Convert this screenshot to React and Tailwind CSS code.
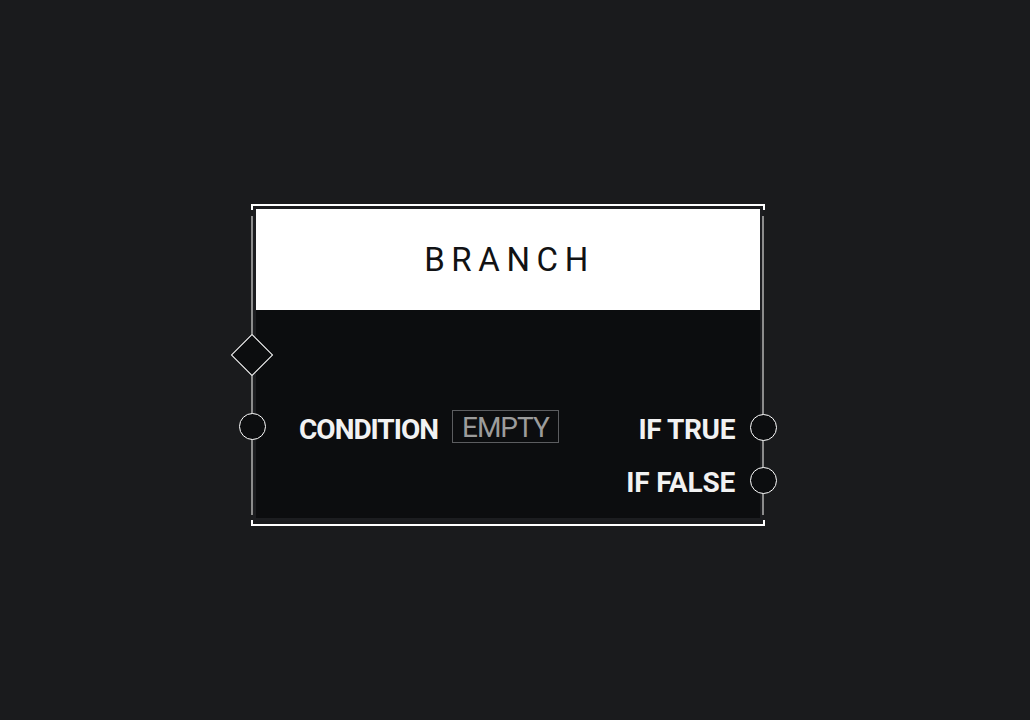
export default function App() {
  return (
    <div className="h-[720px] w-full bg-[#1a1b1d] pl-[251px] pt-[204px] font-[Roboto,sans-serif]">
      {/* node frame */}
      <div className="relative w-[514px] h-[322px] pl-[2px] pt-[3px]">
        {/* card */}
        <div className="w-[510px] h-[314px] flex flex-col bg-[#0c0d0f] border-x-[3px] border-t-2 border-b-[3px] border-[#1c1d20]">
          <div className="h-[101px] bg-white flex items-center justify-center pl-[3px]">
            <span className="text-[33px] leading-none tracking-[0.2em] text-[#111214]">BRANCH</span>
          </div>
          <div className="flex-1 flex justify-between items-start pl-[43px] pr-[25px] pt-[100px]">
            <div className="flex items-start gap-[14px]">
              <span className="mt-[6px] text-[28px] leading-[28px] font-bold tracking-[-1px] text-[#f2f2f2]">CONDITION</span>
              <span className="h-[33px] px-[9px] pt-[3px] flex items-center border border-[#5c5d60] text-[28px] leading-none tracking-[-1px] text-[#9c9c9c]">
                EMPTY
              </span>
            </div>
            <div className="flex flex-col items-end gap-[25px] pt-[6px]">
              <span className="text-[28px] leading-[28px] font-bold tracking-[-0.4px] text-[#f2f2f2]">IF TRUE</span>
              <span className="text-[28px] leading-[28px] font-bold tracking-[-0.2px] text-[#f2f2f2]">IF FALSE</span>
            </div>
          </div>
        </div>

        {/* frame lines */}
        <div className="absolute left-0 top-0 w-full h-[2px] bg-white" />
        <div className="absolute left-0 top-0 w-[2px] h-[6px] bg-white" />
        <div className="absolute right-0 top-0 w-[2px] h-[6px] bg-white" />
        <div className="absolute left-0 bottom-0 w-full h-[2px] bg-white" />
        <div className="absolute left-0 bottom-0 w-[2px] h-[6px] bg-white" />
        <div className="absolute right-0 bottom-0 w-[2px] h-[6px] bg-white" />
        <div className="absolute left-0 top-[12px] bottom-[11px] w-[2px] bg-[#8c8c8c]" />
        <div className="absolute right-[1px] top-[12px] bottom-[11px] w-[2px] bg-[#8c8c8c]" />

        {/* ports */}
        <div className="absolute left-[-14px] top-[136px] w-[30px] h-[30px] rotate-45 bg-[#0c0d0f] border-[1.5px] border-white" />
        <div className="absolute left-[-12px] top-[209px] w-[27px] h-[27px] rounded-full bg-[#0c0d0f] border-[1.5px] border-white" />
        <div className="absolute left-[499px] top-[210px] w-[27px] h-[27px] rounded-full bg-[#0c0d0f] border-[1.5px] border-white" />
        <div className="absolute left-[499px] top-[263px] w-[27px] h-[27px] rounded-full bg-[#0c0d0f] border-[1.5px] border-white" />
      </div>
    </div>
  );
}
